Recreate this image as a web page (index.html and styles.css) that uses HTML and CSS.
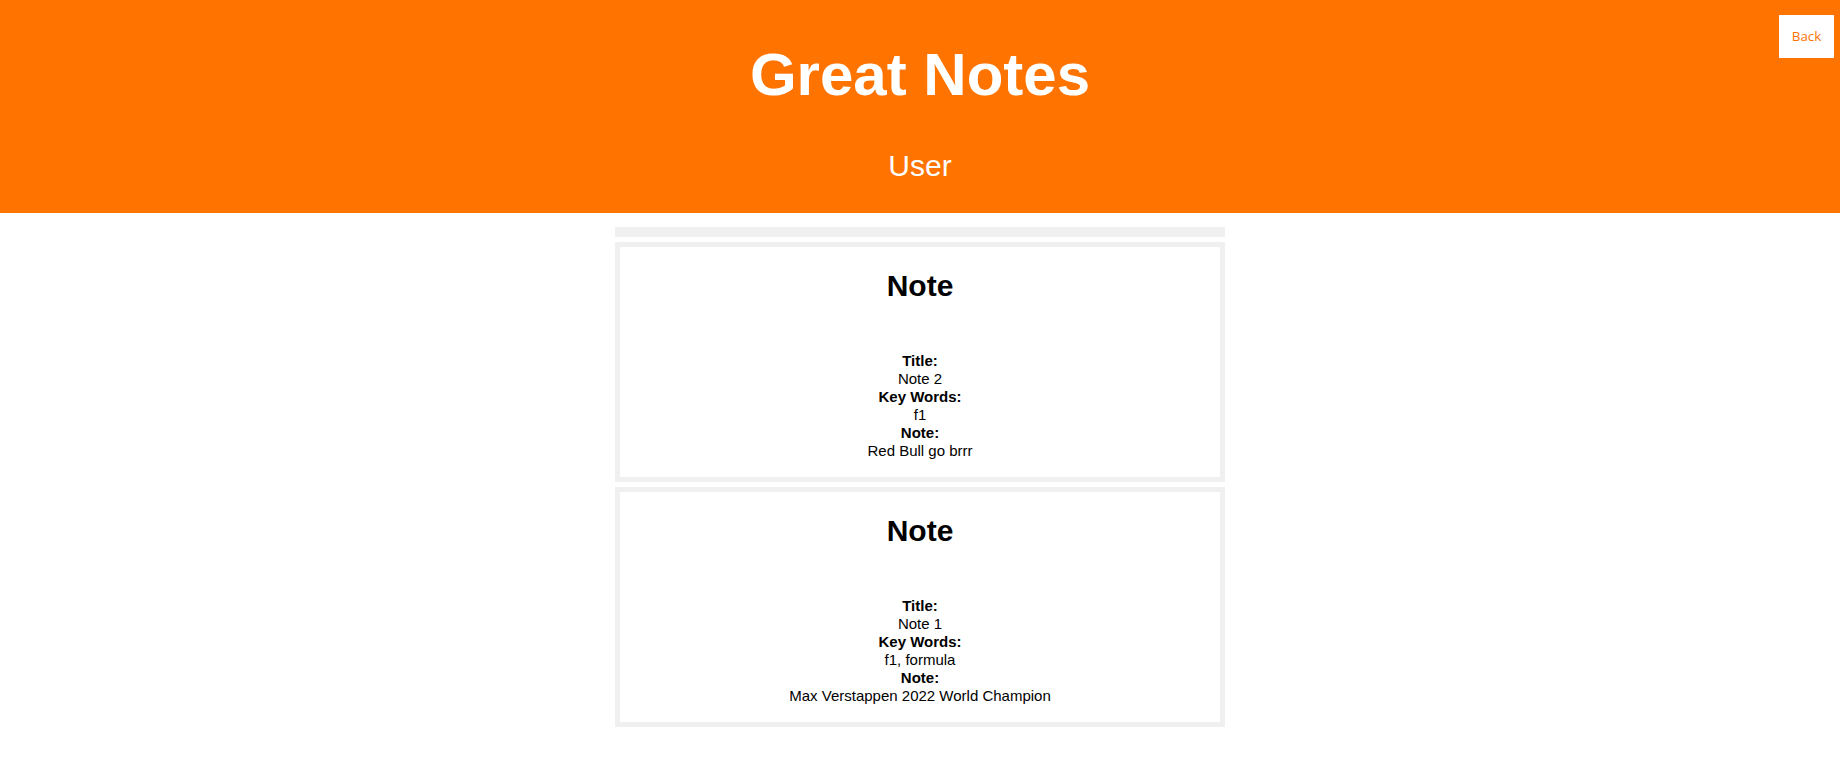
FILE: index.html
```html
<!DOCTYPE html>
<html lang="en">
<head>
<meta charset="utf-8">
<title>Great Notes</title>
<link rel="stylesheet" href="styles.css">
</head>
<body>
<header class="hero">
  <h1 class="hero__title">Great Notes</h1>
  <p class="hero__user">User</p>
  <button class="back-btn" type="button">Back</button>
</header>
<main class="notes">
  <div class="notes__bar"></div>
  <article class="note">
    <h2 class="note__heading">Note</h2>
    <dl class="note__fields">
      <dt>Title:</dt>
      <dd>Note 2</dd>
      <dt>Key Words:</dt>
      <dd>f1</dd>
      <dt>Note:</dt>
      <dd>Red Bull go brrr</dd>
    </dl>
  </article>
  <article class="note">
    <h2 class="note__heading">Note</h2>
    <dl class="note__fields">
      <dt>Title:</dt>
      <dd>Note 1</dd>
      <dt>Key Words:</dt>
      <dd>f1, formula</dd>
      <dt>Note:</dt>
      <dd>Max Verstappen 2022 World Champion</dd>
    </dl>
  </article>
</main>
</body>
</html>
```
FILE: styles.css
```css
html, body {
  margin: 0;
  padding: 0;
}

body {
  font-family: "Liberation Sans", Arial, sans-serif;
  font-size: 15px;
  color: #000;
  background: #fff;
}

.hero {
  position: relative;
  background: #ff7300;
  color: #fff;
  text-align: center;
  padding: 40px 0 30px;
}

.hero__title {
  margin: 0;
  font-size: 60px;
  font-weight: 700;
  line-height: normal;
}

.hero__user {
  margin: 40px 0 0;
  font-size: 30px;
  line-height: normal;
}

.back-btn {
  position: absolute;
  top: 15px;
  right: 6px;
  width: 55px;
  height: 43px;
  padding: 0 0 2px;
  border: none;
  background: #fff;
  color: #ff7300;
  font-family: "Open Sans", "Noto Sans", sans-serif;
  font-size: 13.33px;
  cursor: pointer;
}

.notes {
  width: 610px;
  margin: 14px auto 0;
  display: flex;
  flex-direction: column;
  gap: 5px;
}

.notes__bar {
  height: 0;
  border: 5px solid #f0f0f0;
}

.note {
  border: 5px solid #f0f0f0;
  text-align: center;
  padding-bottom: 17px;
}

.note__heading {
  margin: 22px 0 49px;
  font-size: 30px;
  font-weight: 700;
  line-height: normal;
}

.note__fields {
  margin: 0;
  line-height: 18px;
}

.note__fields dt {
  font-weight: 700;
}

.note__fields dd {
  margin: 0;
}
```
